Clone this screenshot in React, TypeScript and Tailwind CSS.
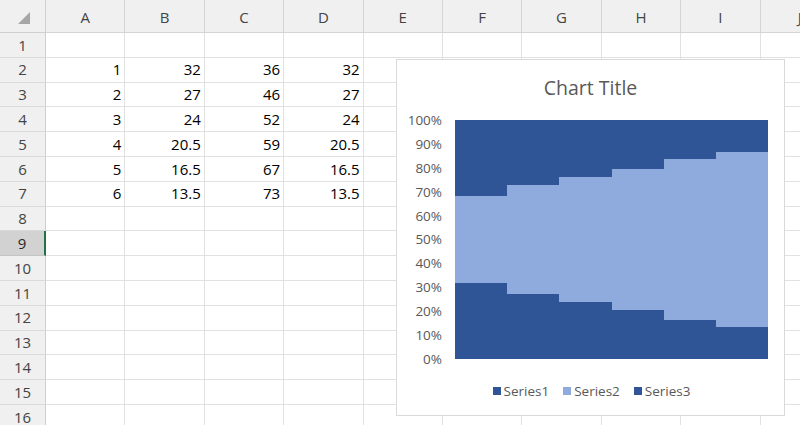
import React from "react";

const COLS = ["A", "B", "C", "D", "E", "F", "G", "H", "I", "J"];
const ROWS = Array.from({ length: 16 }, (_, i) => i + 1);

// rows 2..7 hold the data (A..D)
const DATA: (string | number)[][] = [
  [1, 32, 36, 32],
  [2, 27, 46, 27],
  [3, 24, 52, 24],
  [4, 20.5, 59, 20.5],
  [5, 16.5, 67, 16.5],
  [6, 13.5, 73, 13.5],
];

const DARK = "#2f5597";
const LIGHT = "#8faadc";

function cellValue(row: number, col: number) {
  const r = DATA[row - 2];
  if (!r || col > 3) return "";
  return String(r[col]);
}

function StackedChart() {
  const w = 313;
  const h = 239;
  const step = w / DATA.length;
  const yLabels = ["100%", "90%", "80%", "70%", "60%", "50%", "40%", "30%", "20%", "10%", "0%"];

  return (
    <div className="absolute left-[396px] top-[59px] w-[389px] h-[357px] bg-white border border-[#d9d9d9] flex flex-col items-stretch">
      <div className="h-[55px] flex items-center justify-center pt-[1px] text-[19.5px] text-[#595959] font-['Open_Sans',sans-serif]">
        Chart Title
      </div>

      <div className="flex pl-[6px] pt-[5px]">
        {/* value axis */}
        <div className="w-[39px] h-[253px] -mt-[7px] flex flex-col justify-between items-end text-[13.5px] leading-[14px] text-[#595959] font-['Open_Sans',sans-serif]">
          {yLabels.map((l) => (
            <span key={l}>{l}</span>
          ))}
        </div>
        <svg width={w} height={h} className="ml-[13px] block" shapeRendering="crispEdges">
          {DATA.map((d, i) => {
            const s1 = Number(d[1]);
            const s2 = Number(d[2]);
            const h1 = (s1 / 100) * h;
            const h2 = (s2 / 100) * h;
            const x = i * step;
            return (
              <g key={i}>
                <rect x={x} y={0} width={step + 0.5} height={h - h1 - h2} fill={DARK} />
                <rect x={x} y={h - h1 - h2} width={step + 0.5} height={h2} fill={LIGHT} />
                <rect x={x} y={h - h1} width={step + 0.5} height={h1} fill={DARK} />
              </g>
            );
          })}
        </svg>
      </div>

      <div className="flex justify-center items-center gap-[14px] mt-[15px] pl-[2px] text-[13.5px] text-[#595959] font-['Open_Sans',sans-serif]">
        {[
          ["Series1", DARK],
          ["Series2", LIGHT],
          ["Series3", DARK],
        ].map(([name, color]) => (
          <div key={name} className="flex items-center gap-[3px]">
            <span className="w-[8px] h-[8px] inline-block" style={{ backgroundColor: color }} />
            <span>{name}</span>
          </div>
        ))}
      </div>
    </div>
  );
}

export default function App() {
  return (
    <div className="relative w-[800px] h-[425px] overflow-hidden bg-white font-['Open_Sans',sans-serif]">
      <div className="grid grid-cols-[46px_repeat(10,79.4px)] grid-rows-[33px_repeat(16,24.8px)]">
        {/* corner */}
        <div className="bg-[#f0f0f0] border-r border-b border-[#d0d0d0] flex items-center justify-center">
          <svg width="14" height="14" viewBox="0 0 14 14" className="ml-[4px] mt-[4px]">
            <polygon points="12,1 12,13 0,13" fill="#a6a6a6" />
          </svg>
        </div>
        {COLS.map((c) => (
          <div
            key={c}
            className="bg-[#f0f0f0] border-r border-b border-[#d4d4d4] flex items-center justify-center text-[15px] text-[#444444] pt-[2px]"
          >
            {c}
          </div>
        ))}

        {ROWS.map((r) => (
          <React.Fragment key={r}>
            <div
              className={
                r === 9
                  ? "bg-[#d2d2d2] border-b border-[#c4c4c4] border-r-2 border-r-[#217346] flex items-center justify-center text-[15px] text-[#262626]"
                  : "bg-[#f0f0f0] border-b border-[#dadada] border-r border-r-[#cfcfcf] flex items-center justify-center text-[15px] text-[#444444]"
              }
            >
              {r}
            </div>
            {COLS.map((c, ci) => (
              <div
                key={c}
                className="border-r border-b border-[#e1e1e1] flex items-center justify-end pr-[3px] text-[15px] text-black"
              >
                {cellValue(r, ci)}
              </div>
            ))}
          </React.Fragment>
        ))}
      </div>

      <StackedChart />
    </div>
  );
}
